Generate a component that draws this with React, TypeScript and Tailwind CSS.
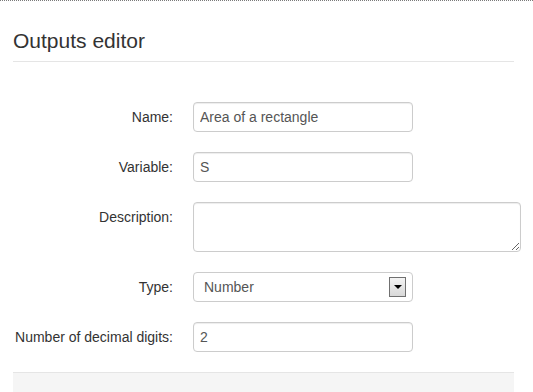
import { ReactNode } from 'react';

function Row({ label, children, top = false }: { label: string; children: ReactNode; top?: boolean }) {
  return (
    <div className="flex mb-5">
      <label className={`w-[160px] shrink-0 text-right pt-[5px] leading-5 text-[14px] text-[#333] ${top ? '' : ''}`}>
        {label}
      </label>
      <div className="ml-5">{children}</div>
    </div>
  );
}

const inputCls =
  'block w-[220px] h-[30px] px-[6px] py-1 text-[14px] leading-5 text-[#555] bg-white border border-[#ccc] rounded-[4px] shadow-[inset_0_1px_1px_rgba(0,0,0,0.075)] outline-none';

export default function App() {
  return (
    <div
      className="w-[533px] h-[392px] overflow-hidden bg-white border-t border-dotted border-[#7a7a7a]"
      style={{ fontFamily: '"Liberation Sans", Arial, sans-serif' }}
    >
      <div className="ml-[13px] w-[501px] pt-5">
        <div className="h-[41px] leading-10 text-[21px] text-[#333] border-b border-[#e5e5e5]">Outputs editor</div>
        <div className="pt-10">
          <Row label="Name:">
            <input className={inputCls} defaultValue="Area of a rectangle" />
          </Row>
          <Row label="Variable:">
            <input className={inputCls} defaultValue="S" />
          </Row>
          <Row label="Description:" top>
            <textarea className={`${inputCls} w-[328px] h-[50px] resize`} />
          </Row>
          <Row label="Type:">
            <div className="relative w-[220px] h-[30px] border border-[#ccc] rounded-[4px] bg-white flex items-center">
              <span className="pl-[10px] text-[14px] leading-5 text-[#555]">Number</span>
              <div className="absolute left-[195px] top-[4px] w-[17px] h-[20px] border border-[#707070] bg-gradient-to-b from-[#f4f4f4] to-[#d8d8d8] flex items-center justify-center">
                <div className="w-0 h-0 border-l-[4px] border-r-[4px] border-t-[4px] border-l-transparent border-r-transparent border-t-black" />
              </div>
            </div>
          </Row>
          <Row label="Number of decimal digits:">
            <input className={inputCls} defaultValue="2" />
          </Row>
        </div>
        <div className="h-[40px] bg-[#f5f5f5] border-t border-[#e5e5e5]" />
      </div>
    </div>
  );
}
